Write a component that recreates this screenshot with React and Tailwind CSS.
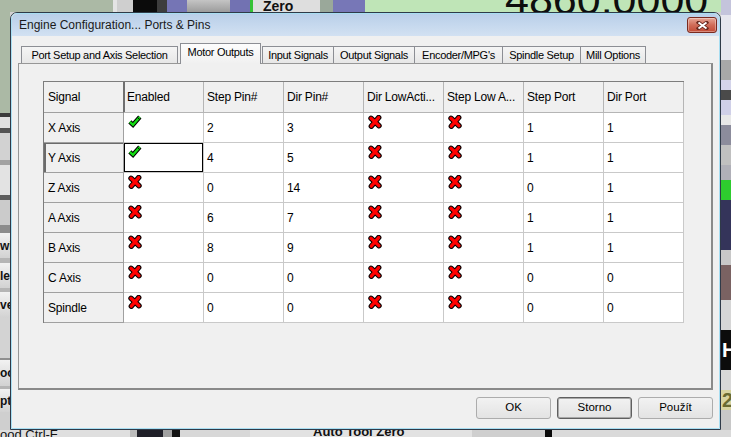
import React from "react";

const HEADERS = [
  "Signal",
  "Enabled",
  "Step Pin#",
  "Dir Pin#",
  "Dir LowActi...",
  "Step Low A...",
  "Step Port",
  "Dir Port",
];

const ROWS = [
  { name: "X Axis", enabled: true, stepPin: "2", dirPin: "3", stepPort: "1", dirPort: "1" },
  { name: "Y Axis", enabled: true, stepPin: "4", dirPin: "5", stepPort: "1", dirPort: "1", selected: true },
  { name: "Z Axis", enabled: false, stepPin: "0", dirPin: "14", stepPort: "0", dirPort: "1" },
  { name: "A Axis", enabled: false, stepPin: "6", dirPin: "7", stepPort: "1", dirPort: "1" },
  { name: "B Axis", enabled: false, stepPin: "8", dirPin: "9", stepPort: "1", dirPort: "1" },
  { name: "C Axis", enabled: false, stepPin: "0", dirPin: "0", stepPort: "0", dirPort: "0" },
  { name: "Spindle", enabled: false, stepPin: "0", dirPin: "0", stepPort: "0", dirPort: "0" },
];

// Mach3 screen pieces peeking out around the dialog
const LEFT_STRIPES = [
  { h: "h-[101px]", c: "bg-[#abb9a5]" },
  { h: "h-[4px]", c: "bg-[#3b3b3b]" },
  { h: "h-[11px]", c: "bg-[#e1e1e1]" },
  { h: "h-[5px]", c: "bg-[#545454]" },
  { h: "h-[27px]", c: "bg-[#d2d2d2]" },
  { h: "h-[5px]", c: "bg-[#a2a2a2]" },
  { h: "h-[30px]", c: "bg-[#e3e3e3]" },
  { h: "h-[5px]", c: "bg-[#5e5e5e]" },
  { h: "h-[25px]", c: "bg-[#cbcbcb]" },
  { h: "h-[8px]", c: "bg-[#8c8c8c]" },
  { h: "h-[25px]", c: "bg-gradient-to-b from-[#f2f2f2] to-[#d2d2d2]", t: "wide" },
  { h: "h-[5px]", c: "bg-[#b5b5b5]" },
  { h: "h-[25px]", c: "bg-gradient-to-b from-[#f2f2f2] to-[#d2d2d2]", t: "le" },
  { h: "h-[4px]", c: "bg-[#b5b5b5]" },
  { h: "h-[26px]", c: "bg-gradient-to-b from-[#f2f2f2] to-[#d2d2d2]", t: "ve" },
  { h: "h-[40px]", c: "bg-[#d3d3d3]" },
  { h: "h-[2px]", c: "bg-[#8f8f8f]" },
  { h: "h-[26px]", c: "bg-gradient-to-b from-[#f2f2f2] to-[#d2d2d2]", t: "oo" },
  { h: "h-[3px]", c: "bg-[#b5b5b5]" },
  { h: "h-[23px]", c: "bg-gradient-to-b from-[#f2f2f2] to-[#d2d2d2]", t: "pt" },
  { h: "h-[25px]", c: "bg-[#cfcfcf]" },
];

const RIGHT_STRIPES = [
  { h: "h-[15px]", c: "bg-[#c4c4dc]" },
  { h: "h-[45px]", c: "bg-[#e6e6ee]" },
  { h: "h-[20px]", c: "bg-[#a8a8a8]" },
  { h: "h-[10px]", c: "bg-[#d4d4ea]" },
  { h: "h-[10px]", c: "bg-[#4a4a4a]" },
  { h: "h-[15px]", c: "bg-[#d0d0e8]" },
  { h: "h-[10px]", c: "bg-[#e8e8e8]" },
  { h: "h-[20px]", c: "bg-[#8c8c9c]" },
  { h: "h-[20px]", c: "bg-[#c0c0c0]" },
  { h: "h-[15px]", c: "bg-[#b0b0b8]" },
  { h: "h-[20px]", c: "bg-[#2ecc2e]" },
  { h: "h-[50px]", c: "bg-[#34345a]" },
  { h: "h-[15px]", c: "bg-[#c8c8c8]" },
  { h: "h-[35px]", c: "bg-[#7a6262]" },
  { h: "h-[30px]", c: "bg-[#d6d6d6]" },
  { h: "h-[40px]", c: "bg-[#0c0c0c]", t: "H", tc: "text-white" },
  { h: "h-[20px]", c: "bg-[#d8d8d8]" },
  { h: "h-[20px]", c: "bg-[#d8d4a0]", t: "2", tc: "text-[#6b6b30]" },
  { h: "h-[27px]", c: "bg-[#c8c8c8]" },
];

function MachScreen() {
  return (
    <>
      {/* top edge: buttons and the big DRO */}
      <div className="absolute left-0 top-0 flex h-[12px] w-[731px]">
        <div className="w-[113px] bg-[#abb9a5]" />
        <div className="w-[4px] bg-[#e4e4e4]" />
        <div className="w-[16px] bg-[#cfcfcf]" />
        <div className="w-[24px] bg-[#0b0b0b]" />
        <div className="w-[10px] bg-[#3d3d3d]" />
        <div className="w-[20px] bg-[#7575b5]" />
        <div className="w-[43px] bg-gradient-to-b from-[#c4c4c4] to-[#9c9c9c]" />
        <div className="w-[20px] bg-[#7272b2]" />
        <div className="w-[3px] bg-[#36c236]" />
        <div className="w-[67px] overflow-hidden bg-[#dedede] pl-[10px] text-[14px] font-bold leading-[12px] text-[#111]">
          Zero
        </div>
        <div className="w-[13px] bg-[#9aa89a]" />
        <div className="w-[32px] bg-[#7777b7]" />
        <div className="relative flex-1 overflow-hidden bg-[#bfe5b7]">
          <span className="absolute left-[140px] top-[-22px] whitespace-nowrap text-[43px] leading-[43px] text-[#0e0e0e]">
            4860.0000
          </span>
        </div>
        <div className="w-[10px] bg-[#8686bc]" />
      </div>

      {/* left edge */}
      <div className="absolute left-0 top-[12px] flex w-[10px] flex-col overflow-hidden">
        {LEFT_STRIPES.map((s, i) => (
          <div
            key={i}
            className={`${s.h} ${s.c} flex shrink-0 items-center overflow-hidden whitespace-nowrap text-[12px] font-bold leading-none text-[#111]`}
          >
            {s.t}
          </div>
        ))}
      </div>

      {/* right edge */}
      <div className="absolute right-0 top-0 flex w-[10px] flex-col overflow-hidden">
        {RIGHT_STRIPES.map((s, i) => (
          <div
            key={i}
            className={`${s.h} ${s.c} ${s.tc || ""} flex shrink-0 items-center overflow-hidden whitespace-nowrap pl-[1px] text-[20px] font-bold leading-none`}
          >
            {s.t}
          </div>
        ))}
      </div>

      {/* bottom edge */}
      <div className="absolute bottom-0 left-0 flex h-[7px] w-[731px] overflow-hidden">
        <div className="w-[130px] overflow-hidden bg-[#dfdfdf]">
          <div className="mt-[-2px] whitespace-nowrap text-[13px] leading-[13px] text-[#111]">ood Ctrl-F</div>
        </div>
        <div className="w-[7px] bg-[#bcbcbc]" />
        <div className="w-[26px] bg-[#1f1f28]" />
        <div className="w-[9px] bg-[#a0a0a0]" />
        <div className="w-[8px] bg-[#111111]" />
        <div className="w-[70px] bg-[#d8d8d8]" />
        <div className="w-[222px] overflow-hidden bg-[#e2e2e2] pl-[63px]">
          <div className="mt-[-5px] whitespace-nowrap text-[13px] font-bold leading-[13px] text-[#111]">Auto Tool Zero</div>
        </div>
        <div className="w-[73px] bg-[#cfcfcf]" />
        <div className="w-[7px] bg-[#0b0b0b]" />
        <div className="flex-1 bg-[#dadada]" />
      </div>
    </>
  );
}

function CheckMark() {
  return (
    <svg width="14" height="13" viewBox="0 0 14 13" className="block">
      <path d="M1.8 6.8 L5 9.8 L11.8 2" stroke="#000" strokeWidth="4.4" strokeLinejoin="miter" strokeLinecap="butt" fill="none" />
      <path d="M1.8 6.8 L5 9.8 L11.8 2" stroke="#12dc12" strokeWidth="2.4" strokeLinejoin="miter" strokeLinecap="butt" fill="none" />
      <path d="M9.6 2.6 L11.4 4.2" stroke="#000" strokeWidth="1" fill="none" />
    </svg>
  );
}

function CrossMark() {
  return (
    <svg width="14" height="14" viewBox="0 0 14 14" className="block">
      <path d="M3 3.3 L11 10.7 M10.7 2.6 L3.3 11.2" stroke="#000" strokeWidth="5.4" strokeLinecap="round" fill="none" />
      <path d="M3 3.3 L11 10.7 M10.7 2.6 L3.3 11.2" stroke="#ff0000" strokeWidth="3.3" strokeLinecap="round" fill="none" />
    </svg>
  );
}

function HeaderCell({ label, index }) {
  if (index === 0) {
    return (
      <div className="flex h-[31px] items-center border-b border-r border-b-[#a0a0a0] border-r-[#6f6f6f] bg-[#f0f0f0] pl-[4px]">
        {label}
      </div>
    );
  }
  if (index === 1) {
    return (
      <div className="flex h-[31px] items-center border-b border-r border-[#b5b5b5] bg-[#f0f0f0] pl-[3px] shadow-[inset_1px_0_0_#6f6f6f]">
        {label}
      </div>
    );
  }
  return (
    <div className="flex h-[31px] items-center whitespace-nowrap border-b border-r border-[#b5b5b5] bg-[#f0f0f0] pl-[3px]">
      {label}
    </div>
  );
}

function TextCell({ children }) {
  return (
    <div className="flex h-[30px] items-center border-b border-r border-[#c9c9c9] bg-white pl-[3px]">{children}</div>
  );
}

function IconCell({ on, focused }) {
  return (
    <div
      className={`h-[30px] border-b border-r border-[#c9c9c9] bg-white pl-[4px] pt-[2px] ${
        focused ? "shadow-[inset_0_0_0_1px_#000]" : ""
      }`}
    >
      {on ? <CheckMark /> : <CrossMark />}
    </div>
  );
}

function SignalGrid() {
  return (
    <div className="grid w-[641px] grid-cols-[repeat(8,80px)] border-l border-t border-[#7d7d7d] text-[12px] tracking-[-0.2px] text-black">
      {HEADERS.map((h, i) => (
        <HeaderCell key={h} label={h} index={i} />
      ))}
      {ROWS.map((r) => (
        <React.Fragment key={r.name}>
          <div
            className={`flex h-[30px] items-center border-b border-r border-[#a0a0a0] bg-[#f0f0f0] pl-[4px] ${
              r.selected ? "shadow-[inset_2px_1px_0_#6b6b6b]" : ""
            }`}
          >
            {r.name}
          </div>
          <IconCell on={r.enabled} focused={r.selected} />
          <TextCell>{r.stepPin}</TextCell>
          <TextCell>{r.dirPin}</TextCell>
          <IconCell on={false} />
          <IconCell on={false} />
          <TextCell>{r.stepPort}</TextCell>
          <TextCell>{r.dirPort}</TextCell>
        </React.Fragment>
      ))}
    </div>
  );
}

function CloseButton() {
  return (
    <div className="mt-[3px] flex h-[16px] w-[30px] items-center justify-center rounded-[3px] border border-[#7a2a1f] bg-gradient-to-b from-[#e6a696] via-[#d06c58] to-[#c24a35] shadow-[inset_0_0_0_1px_rgba(255,255,255,0.35)]">
      <svg width="13" height="9" viewBox="0 0 13 9" className="block">
        <path d="M2.5 1.5 L10.5 7.5 M10.5 1.5 L2.5 7.5" stroke="#6b2a20" strokeWidth="3.6" strokeLinecap="square" fill="none" />
        <path d="M2.5 1.5 L10.5 7.5 M10.5 1.5 L2.5 7.5" stroke="#ffffff" strokeWidth="2" fill="none" />
      </svg>
    </div>
  );
}

const TAB_IDLE =
  "flex h-[17px] shrink-0 items-center justify-center whitespace-nowrap border border-b-0 border-[#8c8e94] bg-gradient-to-b from-[#f5f5f5] to-[#e7e7e7]";

function TabStrip() {
  return (
    <div className="flex h-[20px] shrink-0 items-end text-[11px] leading-[13px] tracking-[-0.3px] text-black">
      <div className={`${TAB_IDLE} ml-[3px] w-[157px]`}>Port Setup and Axis Selection</div>
      <div className="relative z-10 -mb-[1px] ml-[2px] flex h-[21px] w-[81px] shrink-0 justify-center whitespace-nowrap border border-b-0 border-[#8c8e94] bg-gradient-to-b from-[#fdfdfd] to-[#f0f0f0] pt-[2px]">
        Motor Outputs
      </div>
      <div className={`${TAB_IDLE} ml-[1px] w-[72px]`}>Input Signals</div>
      <div className={`${TAB_IDLE} -ml-[1px] w-[82px]`}>Output Signals</div>
      <div className={`${TAB_IDLE} -ml-[1px] w-[89px]`}>Encoder/MPG's</div>
      <div className={`${TAB_IDLE} -ml-[1px] w-[79px]`}>Spindle Setup</div>
      <div className={`${TAB_IDLE} -ml-[1px] w-[66px]`}>Mill Options</div>
    </div>
  );
}

function ConfigDialog() {
  return (
    <div className="absolute left-[10px] top-[12px] h-[418px] w-[711px] rounded-t-[7px] border border-[#2f3a48] bg-[#f0f0f0]">
      <div className="flex h-full flex-col overflow-hidden rounded-t-[6px] border border-[#a8def2]">
        {/* caption */}
        <div className="flex h-[22px] shrink-0 items-start justify-between bg-gradient-to-b from-[#b9cfe9] to-[#d2e1f2] pl-[7px] pr-[2px]">
          <span className="mt-[4px] text-[12px] leading-[14px] text-[#1a1a1a]">Engine Configuration... Ports &amp; Pins</span>
          <CloseButton />
        </div>

        {/* client area */}
        <div className="flex flex-1 flex-col bg-[#f0f0f0] px-[6px] pt-[7px]">
          <TabStrip />
          <div className="h-[327px] shrink-0 border border-b-2 border-r-2 border-[#979797] border-b-[#8a8a8a] border-r-[#8a8a8a] bg-[#f0f0f0] pl-[24px] pt-[17px]">
            <SignalGrid />
          </div>
          <div className="mt-[7px] flex h-[22px] shrink-0 justify-end gap-[6px] text-[11.5px] text-black">
            <button type="button" className="h-[22px] w-[75px] rounded-[3px] border border-[#acacac] bg-gradient-to-b from-[#f2f2f2] to-[#e3e3e3]">
              OK
            </button>
            <button type="button" className="h-[22px] w-[75px] rounded-[3px] border border-[#5f5f5f] bg-gradient-to-b from-[#f2f2f2] to-[#e3e3e3] shadow-[inset_0_0_0_1px_#a8a8a8]">
              Storno
            </button>
            <button type="button" className="h-[22px] w-[75px] rounded-[3px] border border-[#acacac] bg-gradient-to-b from-[#f2f2f2] to-[#e3e3e3]">
              Použít
            </button>
          </div>
        </div>
      </div>
    </div>
  );
}

export default function App() {
  return (
    <div className="relative h-[437px] w-[731px] overflow-hidden bg-[#d2d2d2] font-['Liberation_Sans',Arial,sans-serif]">
      <MachScreen />
      <ConfigDialog />
    </div>
  );
}
